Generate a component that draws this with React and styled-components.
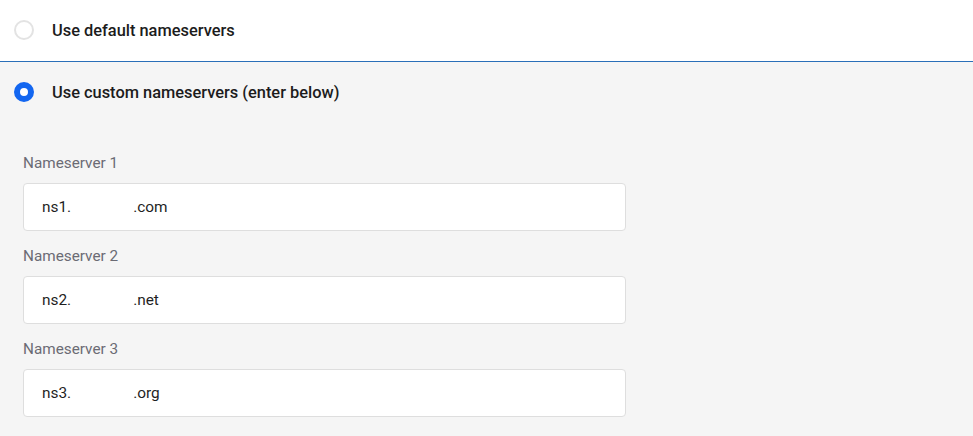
import React from "react";
import styled, { createGlobalStyle } from "styled-components";

const GlobalStyle = createGlobalStyle`
  body {
    margin: 0;
    background: #f5f5f5;
    font-family: Roboto, "Liberation Sans", sans-serif;
  }
`;

const Page = styled.div`
  width: 973px;
  height: 436px;
  overflow: hidden;
  background: #f5f5f5;
`;

const Option = styled.label`
  display: flex;
  align-items: center;
  gap: 18px;
  height: ${(p) => p.$height}px;
  padding-left: 14px;
  padding-bottom: 1px;
  box-sizing: border-box;
  background: ${(p) => (p.$checked ? "#f5f5f5" : "#ffffff")};
  border-bottom: ${(p) => (p.$checked ? "none" : "1px solid #2a6fb8")};
  cursor: pointer;
`;

const Radio = styled.span`
  width: 20px;
  height: 20px;
  box-sizing: border-box;
  border-radius: 50%;
  background: #fff;
  border: ${(p) => (p.$checked ? "6px solid #1366f0" : "2px solid #e3e3e3")};
  flex-shrink: 0;
`;

const OptionText = styled.span`
  font-size: 16.4px;
  font-weight: 500;
  color: #1c1c1c;
`;

const Fields = styled.div`
  display: flex;
  flex-direction: column;
  padding: 31px 0 0 23px;
  gap: 16px;
`;

const Field = styled.div`
  display: flex;
  flex-direction: column;
  gap: 11px;
`;

const Label = styled.div`
  font-size: 15.3px;
  color: #6b6b74;
  line-height: 18px;
`;

const InputBox = styled.div`
  width: 603px;
  height: 48px;
  box-sizing: border-box;
  background: #fff;
  border: 1px solid #dedede;
  border-radius: 4px;
  display: flex;
  align-items: center;
  padding-left: 18px;
  font-size: 15.4px;
  color: #1f1f1f;
`;

const Hidden = styled.span`
  display: inline-block;
  width: 62px;
`;

const servers = [
  { label: "Nameserver 1", prefix: "ns1.", suffix: ".com" },
  { label: "Nameserver 2", prefix: "ns2.", suffix: ".net" },
  { label: "Nameserver 3", prefix: "ns3.", suffix: ".org" },
];

const App = () => {
  return (
    <Page>
      <GlobalStyle />
      <Option $height={62}>
        <Radio />
        <OptionText>Use default nameservers</OptionText>
      </Option>
      <Option $checked $height={61}>
        <Radio $checked />
        <OptionText>Use custom nameservers (enter below)</OptionText>
      </Option>
      <Fields>
        {servers.map((s) => (
          <Field key={s.label}>
            <Label>{s.label}</Label>
            <InputBox>
              {s.prefix}
              <Hidden />
              {s.suffix}
            </InputBox>
          </Field>
        ))}
      </Fields>
    </Page>
  );
};

export default App;
